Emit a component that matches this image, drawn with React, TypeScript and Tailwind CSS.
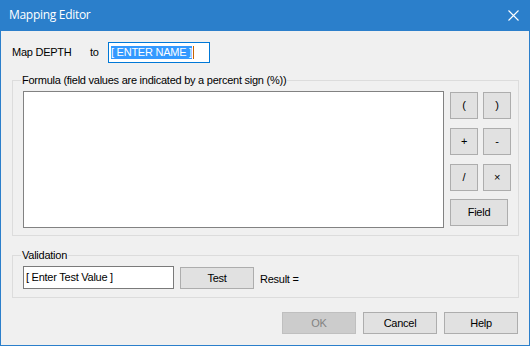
import React from "react";

const Btn = ({ children, className = "" }: { children: React.ReactNode; className?: string }) => (
  <div
    className={`flex items-center justify-center border border-[#adadad] bg-[#e1e1e1] text-[11px] text-black ${className}`}
  >
    {children}
  </div>
);

export default function App() {
  return (
    <div
      className="w-[530px] h-[346px] bg-[#f0f0f0] flex flex-col border-x border-b border-[#2b7fcb] text-[11px] tracking-[-0.25px] text-black"
      style={{ fontFamily: '"Liberation Sans", Arial, sans-serif' }}
    >
      {/* Title bar */}
      <div className="h-[31px] shrink-0 bg-[#2b7fcb] -mx-px flex items-center justify-between pl-[9px] pr-[11px]">
        <span
          className="text-white text-[12px] leading-none mt-[-1px] tracking-[-0.3px]"
          style={{ fontFamily: '"Open Sans", "Noto Sans", sans-serif' }}
        >
          Mapping Editor
        </span>
        <svg width="11" height="11" viewBox="0 0 11 11" className="mt-[-1px]">
          <path d="M0.5 0.5 L10.5 10.5 M10.5 0.5 L0.5 10.5" stroke="white" strokeWidth="1.1" />
        </svg>
      </div>

      <div className="flex flex-col pl-[11px] pr-[10px]">
        {/* Row 1 */}
        <div className="mt-[11px] h-[21px] flex items-center">
          <span className="w-[78px]">Map DEPTH</span>
          <span className="w-[18px]">to</span>
          <div className="w-[102px] h-[21px] border border-[#0078d7] bg-white flex items-center pl-[2px]">
            <span className="bg-[#3399ff] text-white h-[13px] leading-[13px] px-0">[ ENTER NAME ]</span>
            <span className="w-px h-[13px] bg-[#c86400] ml-[1px]" />
          </div>
        </div>

        {/* Formula group */}
        <div className="relative mt-[17px] h-[156px] border border-[#dcdcdc] flex pl-[10px] pt-[10px]">
          <span className="absolute left-[8px] top-[-8px] bg-[#f0f0f0] px-px leading-[14px]">
            Formula (field values are indicated by a percent sign (%))
          </span>
          <div className="w-[421px] h-[137px] border border-[#828282] bg-white" />
          <div className="flex flex-col ml-[6px] mt-px">
            <div className="flex gap-[5px]">
              <Btn className="w-[28px] h-[27px]">(</Btn>
              <Btn className="w-[28px] h-[27px]">)</Btn>
            </div>
            <div className="flex gap-[5px] mt-[9px]">
              <Btn className="w-[28px] h-[27px]">+</Btn>
              <Btn className="w-[28px] h-[27px]">-</Btn>
            </div>
            <div className="flex gap-[5px] mt-[9px]">
              <Btn className="w-[28px] h-[27px]">/</Btn>
              <Btn className="w-[28px] h-[27px] text-[9px]">×</Btn>
            </div>
            <Btn className="w-[58px] h-[27px] mt-[8px]">Field</Btn>
          </div>
        </div>

        {/* Validation group */}
        <div className="relative mt-[19px] h-[43px] border border-[#dcdcdc] flex items-start pl-[10px] pt-[10px]">
          <span className="absolute left-[8px] top-[-8px] bg-[#f0f0f0] px-px leading-[14px]">Validation</span>
          <div className="w-[151px] h-[23px] border border-[#7a7a7a] bg-white flex items-center pl-[2px]">
            [ Enter Test Value ]
          </div>
          <Btn className="w-[74px] h-[22px] ml-[6px] mt-px">Test</Btn>
          <span className="ml-[6px] mt-[5px]">Result =</span>
        </div>

        {/* Bottom buttons */}
        <div className="mt-[14px] flex justify-end gap-[7px] pr-px">
          <div className="w-[74px] h-[22px] border border-[#bfbfbf] bg-[#cccccc] text-[#838383] flex items-center justify-center">
            OK
          </div>
          <Btn className="w-[74px] h-[22px]">Cancel</Btn>
          <Btn className="w-[74px] h-[22px]">Help</Btn>
        </div>
      </div>
    </div>
  );
}
